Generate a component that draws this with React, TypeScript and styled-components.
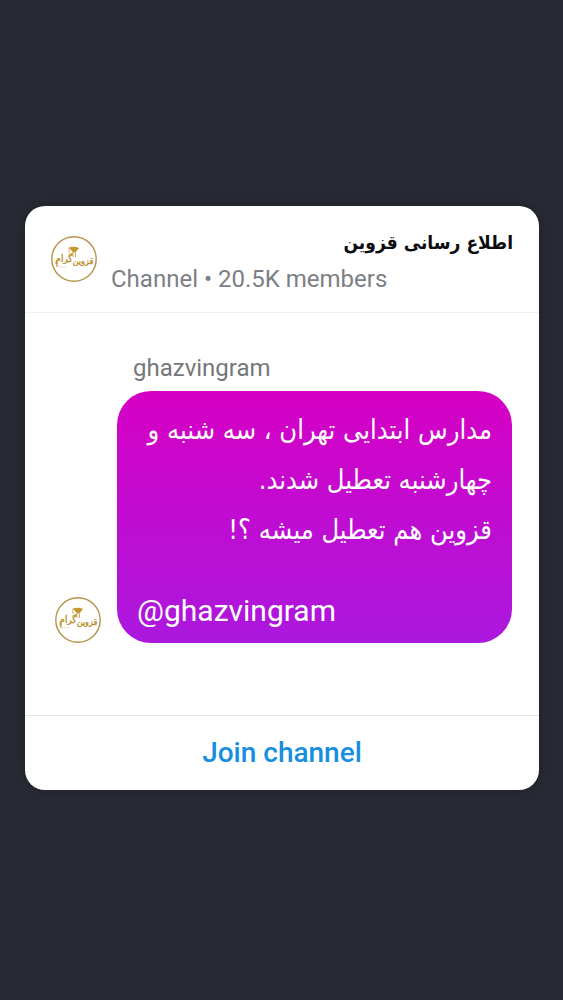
import React from "react";
import styled, { createGlobalStyle } from "styled-components";

const GlobalStyle = createGlobalStyle`
  * { box-sizing: border-box; }
  body {
    margin: 0;
    background: #272a32;
    font-family: Roboto, "DejaVu Sans", sans-serif;
  }
`;

const Page = styled.main`
  min-height: 100vh;
  display: flex;
  align-items: center;
  padding: 24px 24px 29px 25px;
`;

const Card = styled.article`
  flex: 1;
  min-width: 0;
  background: #fff;
  border-radius: 20px;
  overflow: hidden;
  box-shadow: 0 0 10px rgba(0, 0, 0, 0.25);
`;

const Header = styled.header`
  display: flex;
  align-items: center;
  gap: 14px;
  padding: 18px 26px;
  border-bottom: 1px solid #f0f0f2;
`;

const HeaderText = styled.div`
  flex: 1;
  min-width: 0;
  display: grid;
  gap: 4px;
`;

const Title = styled.h1`
  margin: 0;
  font-family: "DejaVu Sans Condensed", "DejaVu Sans", sans-serif;
  font-size: 19px;
  line-height: 36px;
  font-weight: 700;
  color: #0c0d10;
`;

const Meta = styled.p`
  margin: 0;
  font-size: 24px;
  line-height: 30px;
  color: #7b7f84;
`;

const Logo = styled.svg`
  display: block;
  flex: none;
  width: 46px;
  height: 46px;
`;

const Thread = styled.section`
  display: grid;
  grid-template-columns: 46px minmax(0, 1fr);
  column-gap: 16px;
  align-items: end;
  padding: 38px 27px 72px 30px;
`;

const Sender = styled.div`
  grid-column: 2;
  padding-left: 16px;
  font-size: 24px;
  line-height: 34px;
  padding-bottom: 6px;
  color: #77777a;
`;

const Bubble = styled.div`
  padding: 14px 20px 12px;
  border-radius: 34px;
  color: #fff;
  background: linear-gradient(#d600c4, #ab18de);
`;

const Message = styled.p`
  margin: 0;
  font-family: "DejaVu Sans Condensed", "DejaVu Sans", sans-serif;
  font-size: 27px;
  line-height: 50px;
`;

const Handle = styled.p`
  margin: 0;
  padding-top: 36px;
  font-size: 30px;
  line-height: 40px;
`;

const Join = styled.button`
  display: block;
  width: 100%;
  padding: 18px;
  border: 0;
  border-top: 1px solid #e4e5e7;
  background: none;
  font: 500 28px/38px Roboto, sans-serif;
  color: #168fde;
  cursor: pointer;
`;

function ChannelLogo() {
  return (
    <Logo viewBox="0 0 46 46" role="img" aria-label="ghazvingram">
      <circle cx="23" cy="23" r="22.2" fill="#fff" stroke="#b5934a" strokeWidth="1.4" />
      <path d="M18 11.5C21 10.5 25 10.5 28 12L24.5 16.5H22Z" fill="#c4972f" />
      <path d="M18 11.5V17M22 16.5V21M24.5 16.5V21" fill="none" stroke="#c9a14a" strokeWidth="0.9" />
      <path d="M6 25V31" stroke="#bd922f" strokeWidth="1.2" />
      <path d="M7 31H15" stroke="#ddd0b2" strokeWidth="0.6" />
      <g fill="#b98a22" fontFamily="DejaVu Sans Condensed, DejaVu Sans, sans-serif" textAnchor="middle" stroke="#b98a22" strokeWidth="0.3">
        <text x="32" y="28" fontSize="9">قزوین</text>
        <text x="13" y="26" fontSize="10">گرام</text>
      </g>
    </Logo>
  );
}

export default function App() {
  return (
    <>
      <GlobalStyle />
      <Page>
        <Card>
          <Header>
            <ChannelLogo />
            <HeaderText>
              <Title dir="rtl" lang="fa">اطلاع رسانی قزوین</Title>
              <Meta>Channel • 20.5K members</Meta>
            </HeaderText>
          </Header>
          <Thread>
            <Sender>ghazvingram</Sender>
            <ChannelLogo />
            <Bubble>
              <Message dir="rtl" lang="fa">
                مدارس ابتدایی تهران ، سه شنبه و
                <br />
                چهارشنبه تعطیل شدند.
                <br />
                قزوین هم تعطیل میشه ؟!
              </Message>
              <Handle>@ghazvingram</Handle>
            </Bubble>
          </Thread>
          <Join type="button">Join channel</Join>
        </Card>
      </Page>
    </>
  );
}
